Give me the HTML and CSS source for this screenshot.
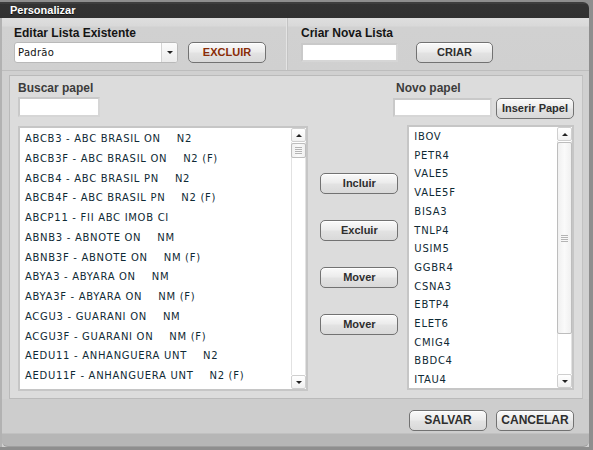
FILE: index.html
```html
<!DOCTYPE html>
<html lang="pt">
<head>
<meta charset="utf-8">
<title>Personalizar</title>
<link rel="stylesheet" href="styles.css">
</head>
<body>
<div class="window">
  <div class="titlebar">Personalizar</div>
  <div class="frame">
    <div class="top">
      <div class="top-sec top-left">
        <div class="label">Editar Lista Existente</div>
        <div class="row">
          <div class="select">
            <span class="select-text">Padrão</span>
            <span class="select-btn"><span class="tri-down"></span></span>
          </div>
          <button class="btn btn-excluir">EXCLUIR</button>
        </div>
      </div>
      <div class="top-sec top-right">
        <div class="label">Criar Nova Lista</div>
        <div class="row">
          <div class="input input-nova"></div>
          <button class="btn btn-criar">CRIAR</button>
        </div>
      </div>
    </div>

    <div class="main">
      <div class="main-head">
        <div class="group">
          <div class="label label-sub">Buscar papel</div>
          <div class="input input-buscar"></div>
        </div>
        <div class="group group-right">
          <div class="label label-sub label-novo">Novo papel</div>
          <div class="row row-novo">
            <div class="input input-novo"></div>
            <button class="btn btn-inserir">Inserir Papel</button>
          </div>
        </div>
      </div>

      <div class="main-body">
        <div class="list list-left">
          <ul class="items items-left">
            <li>ABCB3 - ABC BRASIL ON<span class="seg">N2</span></li>
            <li>ABCB3F - ABC BRASIL ON<span class="seg">N2 (F)</span></li>
            <li>ABCB4 - ABC BRASIL PN<span class="seg">N2</span></li>
            <li>ABCB4F - ABC BRASIL PN<span class="seg">N2 (F)</span></li>
            <li>ABCP11 - FII ABC IMOB CI</li>
            <li>ABNB3 - ABNOTE ON<span class="seg">NM</span></li>
            <li>ABNB3F - ABNOTE ON<span class="seg">NM (F)</span></li>
            <li>ABYA3 - ABYARA ON<span class="seg">NM</span></li>
            <li>ABYA3F - ABYARA ON<span class="seg">NM (F)</span></li>
            <li>ACGU3 - GUARANI ON<span class="seg">NM</span></li>
            <li>ACGU3F - GUARANI ON<span class="seg">NM (F)</span></li>
            <li>AEDU11 - ANHANGUERA UNT<span class="seg">N2</span></li>
            <li>AEDU11F - ANHANGUERA UNT<span class="seg">N2 (F)</span></li>
          </ul>
          <div class="scrollbar">
            <div class="sb-btn"><span class="tri-up"></span></div>
            <div class="sb-track">
              <div class="sb-thumb thumb-small"><span class="grip"></span></div>
            </div>
            <div class="sb-btn"><span class="tri-down"></span></div>
          </div>
        </div>

        <div class="mid">
          <button class="btn btn-mid">Incluir</button>
          <button class="btn btn-mid">Excluir</button>
          <button class="btn btn-mid">Mover</button>
          <button class="btn btn-mid">Mover</button>
        </div>

        <div class="list list-right">
          <ul class="items items-right">
            <li>IBOV</li>
            <li>PETR4</li>
            <li>VALE5</li>
            <li>VALE5F</li>
            <li>BISA3</li>
            <li>TNLP4</li>
            <li>USIM5</li>
            <li>GGBR4</li>
            <li>CSNA3</li>
            <li>EBTP4</li>
            <li>ELET6</li>
            <li>CMIG4</li>
            <li>BBDC4</li>
            <li>ITAU4</li>
          </ul>
          <div class="scrollbar">
            <div class="sb-btn"><span class="tri-up"></span></div>
            <div class="sb-track">
              <div class="sb-thumb thumb-big"><span class="grip"></span></div>
            </div>
            <div class="sb-btn"><span class="tri-down"></span></div>
          </div>
        </div>
      </div>
    </div>

    <div class="footer">
      <button class="btn btn-foot">SALVAR</button>
      <button class="btn btn-foot">CANCELAR</button>
    </div>
    <div class="bottom-strip"></div>
  </div>
</div>
</body>
</html>
```

FILE: styles.css
```css
* { box-sizing: border-box; }

html, body {
  margin: 0;
  padding: 0;
}

body {
  background: #8e8e8e;
  width: 593px;
  height: 450px;
  overflow: hidden;
  padding-top: 2px;
  font-family: "Liberation Sans", Arial, sans-serif;
}

.window {
  width: 589px;
  height: 445px;
  display: flex;
  flex-direction: column;
}

.titlebar {
  height: 16px;
  line-height: 16px;
  background: linear-gradient(#3e3e3e 0, #3e3e3e 2px, #333 2px, #303030);
  border-top-right-radius: 6px;
  color: #fff;
  font-weight: bold;
  font-size: 11px;
  padding-left: 10px;
  text-shadow: 0 1px 0 #111;
}

.frame {
  flex: 1;
  display: flex;
  flex-direction: column;
  background: #d0d0d0;
  border-left: 2px solid #b2b2b2;
}

/* ---------- top section ---------- */
.top {
  height: 53px;
  display: flex;
  background: linear-gradient(#dedede 0, #d9d9d9 8px, #d1d1d1 9px, #d0d0d0);
  border-bottom: 1px solid #bdbdbd;
}

.top-sec {
  padding-top: 9px;
}

.top-left {
  width: 285px;
  padding-left: 12px;
  border-right: 1px solid #e4e4e4;
}

.top-right {
  flex: 1;
  padding-left: 13px;
  border-left: 1px solid #c4c4c4;
}

.label {
  font-size: 12px;
  line-height: 13px;
  font-weight: bold;
  color: #151515;
}

.row {
  display: flex;
  align-items: flex-start;
  margin-top: 2px;
}

.select {
  width: 164px;
  height: 21px;
  background: #fff;
  border: 1px solid #b9b9b9;
  border-radius: 3px;
  display: flex;
  align-items: center;
}

.select-text {
  flex: 1;
  padding-left: 3px;
  font-family: "DejaVu Sans", sans-serif;
  font-size: 10px;
  letter-spacing: 0.3px;
  color: #111;
}

.select-btn {
  width: 16px;
  height: 19px;
  border-left: 1px solid #d4d4d4;
  background: linear-gradient(#fbfbfb, #ececec);
  border-radius: 0 2px 2px 0;
  display: flex;
  align-items: center;
  justify-content: center;
}

.tri-down, .tri-up {
  width: 0;
  height: 0;
  border-left: 3px solid transparent;
  border-right: 3px solid transparent;
}
.tri-down { border-top: 3px solid #222; }
.tri-up { border-bottom: 3px solid #222; }

.btn {
  font-family: "Liberation Sans", Arial, sans-serif;
  font-weight: bold;
  font-size: 11px;
  color: #2e2e2e;
  height: 21px;
  padding: 0;
  border: 1px solid #727272;
  border-radius: 5px;
  background: linear-gradient(#fafafa 0, #ececec 45%, #e2e2e2 55%, #d9d9d9 100%);
  box-shadow: inset 0 1px 0 #fff;
  text-align: center;
  line-height: 19px;
}

.btn-excluir {
  width: 78px;
  margin-left: 10px;
  color: #8a2c07;
}

.input {
  background: #fff;
  border: 2px solid #c9c9c9;
  border-right-color: #d6d6d6;
  border-bottom-color: #d6d6d6;
}

.input-nova {
  width: 97px;
  height: 19px;
  margin-top: 1px;
}

.btn-criar {
  width: 77px;
  margin-left: 18px;
}

/* ---------- main panel ---------- */
.main {
  height: 324px;
  margin: 4px 6px 0 7px;
  background: #dcdcdc;
  border: 1px solid #bababa;
  border-right: 1px solid #c2c2c2;
  padding: 5px 8px 0 8px;
}

.main-head {
  display: flex;
  justify-content: space-between;
  align-items: flex-start;
}

.label-sub {
  color: #3c3c3c;
  line-height: 14px;
}

.input-buscar {
  width: 82px;
  height: 20px;
  margin-top: 2px;
}

.group-right {
  width: 181px;
}

.label-novo {
  padding-left: 3px;
}

.row-novo {
  margin-top: 3px;
}

.input-novo {
  width: 99px;
  height: 19px;
}

.btn-inserir {
  width: 78px;
  margin-left: 4px;
}

.main-body {
  display: flex;
  align-items: flex-start;
  margin-top: 6px;
}

.list {
  height: 265px;
  background: #fff;
  border: 2px solid #c6c6c6;
  display: flex;
  overflow: hidden;
}

.list-left {
  width: 291px;
  margin-top: 1px;
}

.list-right {
  width: 167px;
  margin-left: 9px;
}

.items {
  flex: 1;
  margin: 0;
  padding: 1px 0 0 5px;
  list-style: none;
  font-family: "DejaVu Sans", sans-serif;
  font-size: 10px;
  letter-spacing: 0.7px;
  color: #0f2a35;
  white-space: nowrap;
  overflow: hidden;
}

.items-left li { line-height: 19.75px; }
.items-right li { line-height: 18.7px; }

.seg { margin-left: 16px; }

.scrollbar {
  width: 15px;
  display: flex;
  flex-direction: column;
  background: #fff;
}

.sb-btn {
  height: 14px;
  border: 1px solid #cfcfcf;
  border-radius: 2px;
  background: linear-gradient(#fff, #f1f1f1);
  display: flex;
  align-items: center;
  justify-content: center;
}

.sb-track {
  flex: 1;
  border-left: 1px solid #e2e2e2;
  border-right: 1px solid #e2e2e2;
  padding-top: 1px;
}

.sb-thumb {
  margin: 0 -1px;
  border: 1px solid #bdbdbd;
  border-radius: 2px;
  background: linear-gradient(90deg, #f0f0f0, #fafafa 50%, #f0f0f0);
  display: flex;
  align-items: center;
  justify-content: center;
}

.thumb-small { height: 15px; }
.thumb-big { height: 192px; }

.grip {
  width: 7px;
  height: 7px;
  background: repeating-linear-gradient(#b4b4b4 0, #b4b4b4 1px, transparent 1px, transparent 2px);
}

.mid {
  width: 78px;
  margin-left: 12px;
  padding-top: 48px;
  display: flex;
  flex-direction: column;
  gap: 26px;
}

.btn-mid { width: 78px; }

/* ---------- footer ---------- */
.footer {
  height: 34px;
  display: flex;
  justify-content: flex-end;
  gap: 9px;
  padding: 11px 15px 0 0;
  background: #cdcdcd;
}

.btn-foot { width: 78px; font-size: 12px; }

.bottom-strip {
  flex: 1;
  background: #b6b6b6;
  border-top: 1px solid #c1c1c1;
  border-radius: 0 0 6px 6px;
  border-bottom: 1px solid #9f9f9f;
}
```
